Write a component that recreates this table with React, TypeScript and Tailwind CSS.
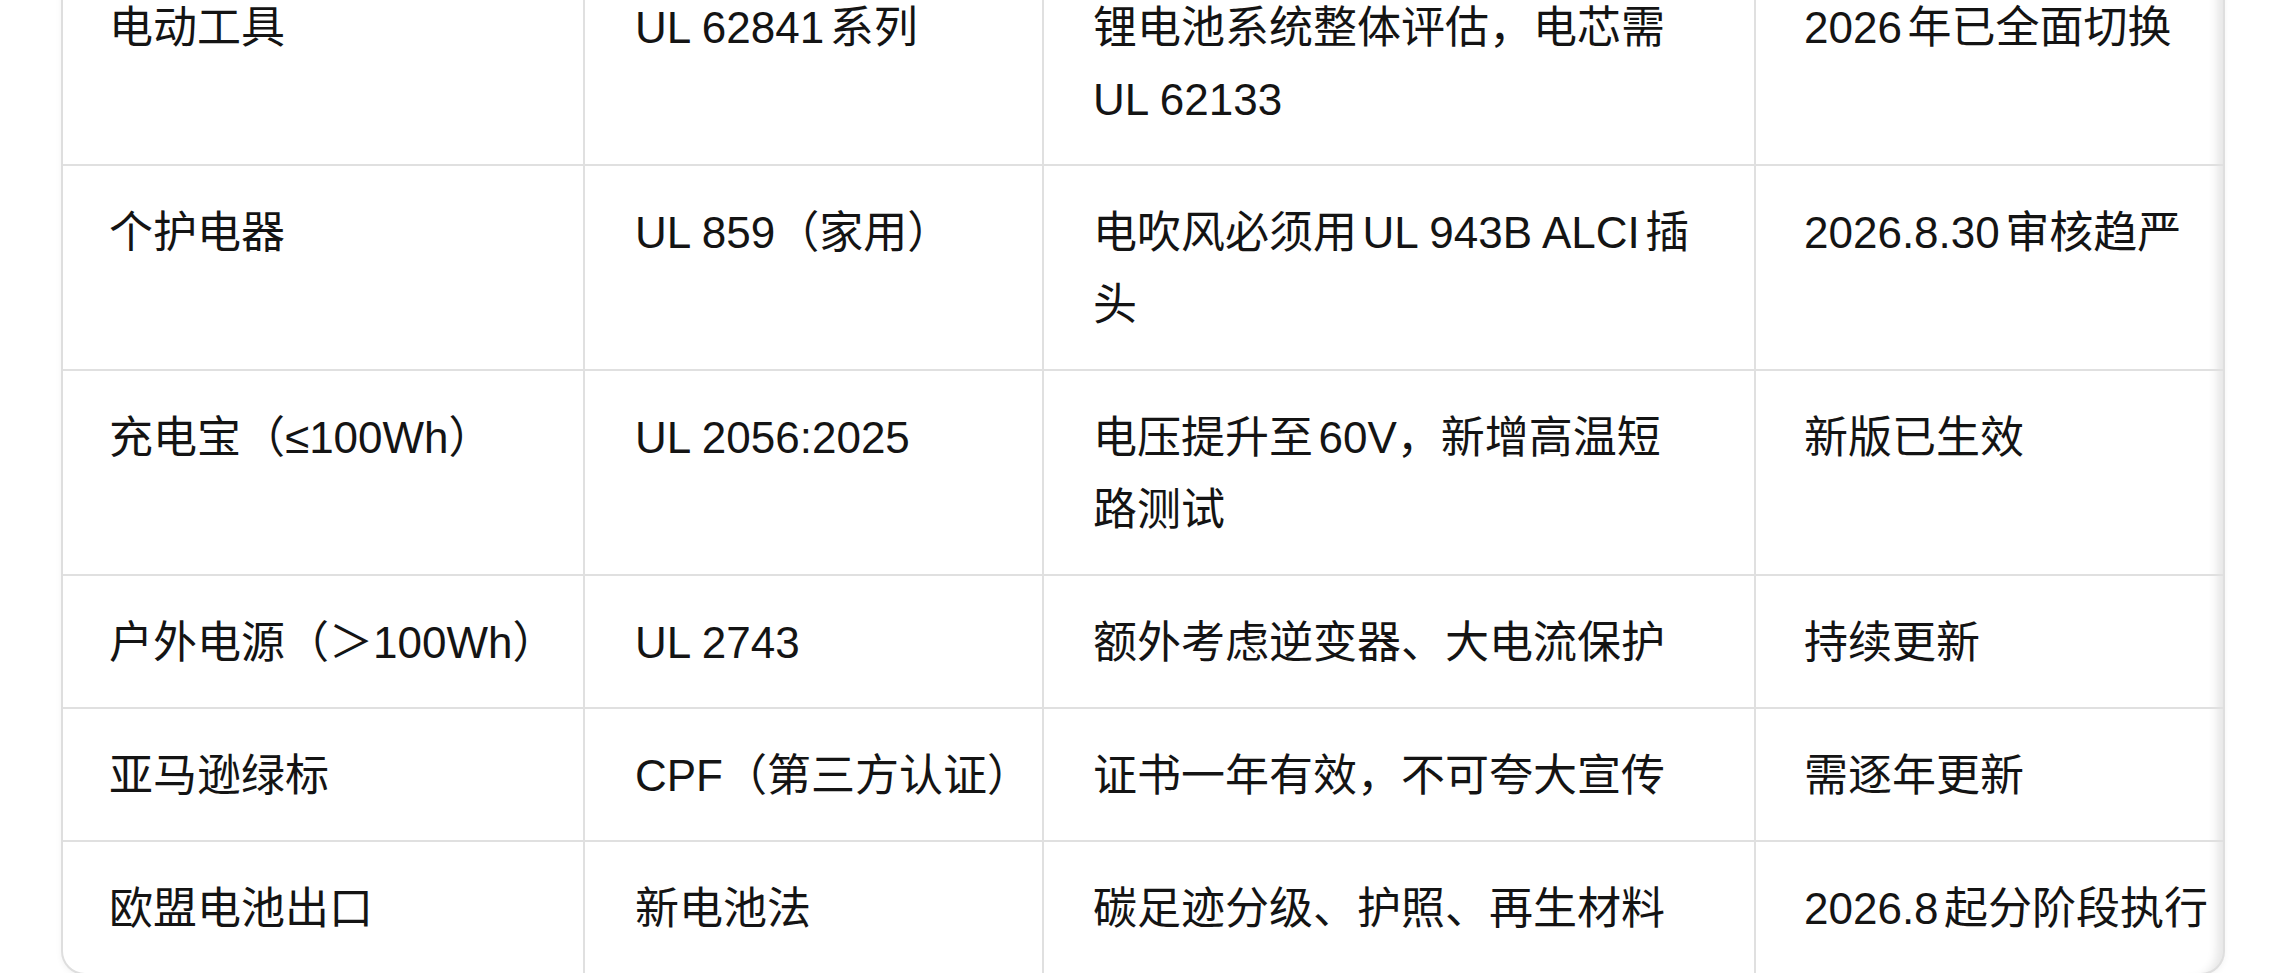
import React from 'react';

type Row = {
  product: string;
  standard: string;
  note: string;
  status: string;
};

const rows: Row[] = [
  { product: '电动工具', standard: 'UL 62841系列', note: '锂电池系统整体评估，电芯需UL 62133', status: '2026年已全面切换' },
  { product: '个护电器', standard: 'UL 859（家用）', note: '电吹风必须用UL 943B ALCI插头', status: '2026.8.30审核趋严' },
  { product: '充电宝（≤100Wh）', standard: 'UL 2056:2025', note: '电压提升至60V，新增高温短路测试', status: '新版已生效' },
  { product: '户外电源（＞100Wh）', standard: 'UL 2743', note: '额外考虑逆变器、大电流保护', status: '持续更新' },
  { product: '亚马逊绿标', standard: 'CPF（第三方认证）', note: '证书一年有效，不可夸大宣传', status: '需逐年更新' },
  { product: '欧盟电池出口', standard: '新电池法', note: '碳足迹分级、护照、再生材料', status: '2026.8起分阶段执行' },
];

export default function App() {
  return (
    <div
      className="h-[973px] w-full overflow-hidden bg-white text-[#141414]"
      style={{ fontFamily: '"Liberation Sans", "Noto Sans CJK SC", sans-serif' }}
    >
      <div className="-mt-[41px] ml-[61px] w-[2164px] rounded-b-[24px] border-2 border-[#dedede] bg-white shadow-[0_2px_6px_rgba(0,0,0,0.05)]">
        <div className="grid grid-cols-[522px_459px_712px_467px] rounded-b-[22px] text-[44px] leading-[72px] [text-autospace:normal] shadow-[inset_-14px_0_10px_-8px_rgba(0,0,0,0.10)]">
          {rows.map((r, i) => {
            const last = i === rows.length - 1;
            const rowBorder = last ? '' : 'border-b-2 border-b-[#e0e0e0]';
            return (
              <React.Fragment key={r.product}>
                <div className={`border-r-2 border-r-[#e0e0e0] pt-[31px] pb-[28px] pl-[46px] pr-[20px] ${rowBorder}`}>
                  {r.product}
                </div>
                <div className={`border-r-2 border-r-[#e0e0e0] pt-[31px] pb-[28px] pl-[50px] pr-0 ${rowBorder}`}>
                  {r.standard}
                </div>
                <div className={`border-r-2 border-r-[#e0e0e0] pt-[31px] pb-[28px] pl-[49px] pr-[58px] ${rowBorder}`}>
                  {r.note}
                </div>
                <div className={`whitespace-nowrap pt-[31px] pb-[28px] pl-[48px] ${rowBorder}`}>
                  {r.status}
                </div>
              </React.Fragment>
            );
          })}
        </div>
      </div>
    </div>
  );
}
